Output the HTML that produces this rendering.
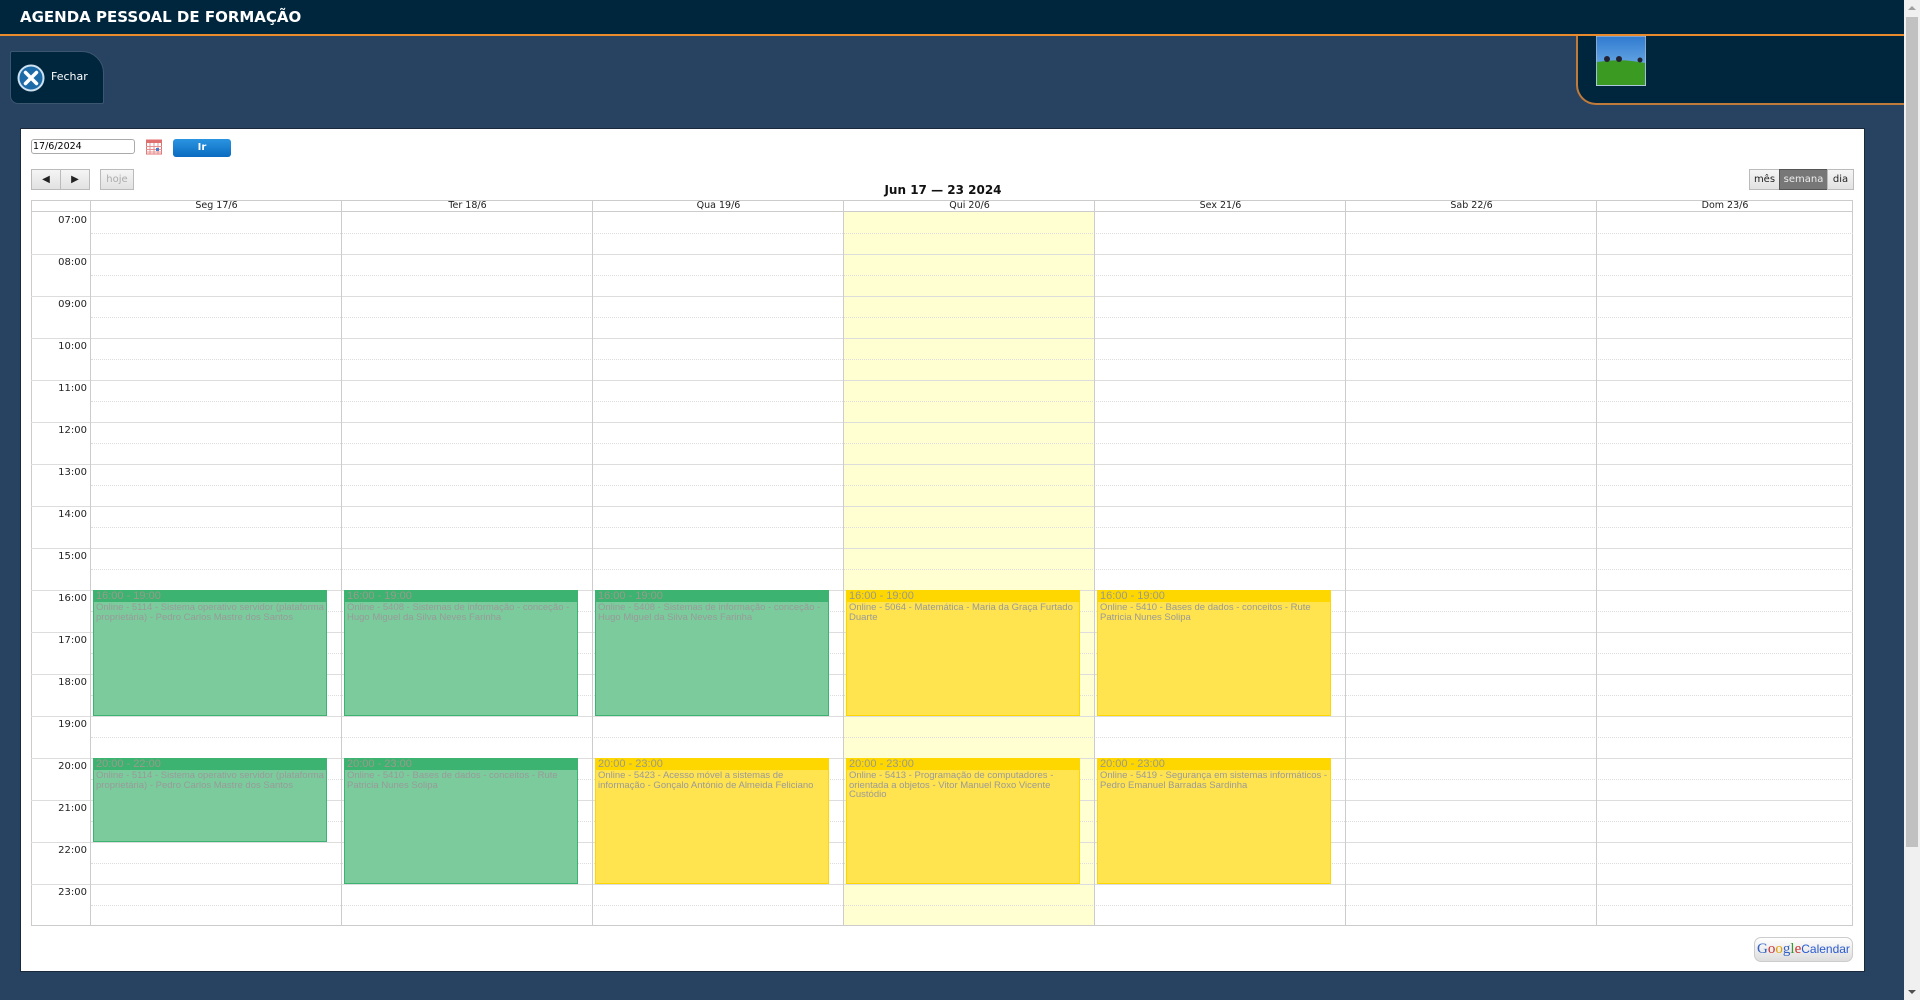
<!DOCTYPE html>
<html><head><meta charset="utf-8"><style>
*{box-sizing:border-box;margin:0;padding:0}
body{width:1920px;height:1000px;background:#284361;font-family:"DejaVu Sans","Liberation Sans",sans-serif;position:relative;overflow:hidden}
.a{position:absolute}
#top{left:0;top:0;width:1904px;height:36px;background:#00263d;border-bottom:2px solid #e98a2c}
#top span{position:absolute;left:20px;top:8px;color:#fff;font-weight:bold;font-size:15px;font-family:"DejaVu Sans",sans-serif}
#fe{left:10px;top:51px;width:94px;height:53px;background:#00263d;border-radius:2px 22px 2px 8px;border:1px solid #3d5670}
#rp{left:1576px;top:36px;width:328px;height:69px;background:#00263d;border-left:2px solid #c07a3a;border-bottom:2px solid #c07a3a;border-bottom-left-radius:20px}
#sb{left:1904px;top:0;width:16px;height:1000px;background:#f0f0f0}
#wp{left:20px;top:128px;width:1845px;height:844px;background:#fff;border:1px solid #1a2a3a}
.btn{position:absolute;border:1px solid #bbb;background:linear-gradient(#f5f5f5,#e2e2e2);font-size:10px;text-align:center;line-height:19px;color:#222}
.hl{position:absolute;left:31px;width:1822px;height:0}
.ev{position:absolute;width:234px;font-family:"Liberation Sans",sans-serif;overflow:hidden}
.ev .h{font-size:11px;line-height:11px;padding-left:2px;color:#9a9a8a}
.ev .b{font-size:9.5px;line-height:9.5px;padding:1px 2px;color:#9a9a9a}
.g{background:#7bcb9d;border:1px solid #3cb371}.g .h{background:#3cb371}
.y{background:#ffe34f;border:1px solid #ffd700}.y .h{background:#ffd700}
.tl{position:absolute;left:31px;width:56px;text-align:right;font-size:10px;color:#222}
.dh{position:absolute;top:200px;height:12px;font-size:9.5px;text-align:center;line-height:12px;color:#222}
</style></head><body>
<div class="a" id="top"><span>AGENDA PESSOAL DE FORMAÇÃO</span></div>
<div class="a" id="fe">
<svg class="a" style="left:6px;top:12px" width="28" height="28" viewBox="0 0 28 28"><circle cx="14" cy="14" r="12.5" fill="#1d6aa8" stroke="#cfe2f2" stroke-width="2"/><path d="M8.5 8.5L19.5 19.5M19.5 8.5L8.5 19.5" stroke="#fff" stroke-width="3.5" stroke-linecap="round"/></svg>
<span class="a" style="left:40px;top:18px;color:#fff;font-size:11px">Fechar</span></div>
<div class="a" id="rp"><svg class="a" style="left:18px;top:0" width="50" height="50" viewBox="0 0 50 50"><defs><linearGradient id="s" x1="0" y1="0" x2="0" y2="1"><stop offset="0" stop-color="#2f7ad0"/><stop offset="1" stop-color="#8cc4f0"/></linearGradient></defs><rect width="50" height="50" fill="url(#s)" stroke="#ccc"/><path d="M1 26Q25 22 49 27V49H1Z" fill="#3a9a22"/><circle cx="11" cy="23" r="3" fill="#223"/><circle cx="23" cy="23" r="3" fill="#223"/><circle cx="44" cy="24" r="2.5" fill="#223"/></svg></div>
<div class="a" id="sb"><div class="a" style="left:2px;top:17px;width:12px;height:830px;background:#c1c1c1"></div>
<div class="a" style="left:4px;top:6px;border:4px solid transparent;border-bottom:4px solid #a0a0a0;border-top:0"></div>
<div class="a" style="left:4px;top:990px;border:4px solid transparent;border-top:4px solid #505050;border-bottom:0"></div></div>
<div class="a" id="wp"></div>
<div class="a" style="left:31px;top:139px;width:104px;height:15px;border:1px solid #aaa;border-radius:3px;font-size:9.5px;line-height:13px;padding-left:1px;background:#fff">17/6/2024</div>
<svg class="a" style="left:146px;top:139px" width="16" height="16" viewBox="0 0 16 16"><rect x="0.5" y="1" width="15" height="14" fill="#fff" stroke="#e07070"/><rect x="0.5" y="1" width="15" height="3" fill="#e07070"/><path d="M0 7.5H16M0 10.5H16M0 13H16M4 4V15M8 4V15M12 4V15" stroke="#e79090" stroke-width="1"/><rect x="10" y="9" width="3" height="3" fill="#4a7ad0"/></svg>
<div class="a" style="left:173px;top:139px;width:58px;height:18px;border-radius:3px;background:linear-gradient(#2b94e0,#0a6bc0);color:#fff;font-size:10px;font-weight:bold;text-align:center;line-height:18px">Ir</div>
<div class="btn" style="left:31px;top:169px;width:30px;height:21px">◀</div>
<div class="btn" style="left:60px;top:169px;width:30px;height:21px">▶</div>
<div class="btn" style="left:100px;top:169px;width:34px;height:21px;color:#aaa">hoje</div>
<div class="a" style="left:0;top:183px;width:1886px;text-align:center;font-size:12px;font-weight:bold;color:#111">Jun 17 — 23 2024</div>
<div class="btn" style="left:1749px;top:169px;width:31px;height:21px">mês</div>
<div class="btn" style="left:1779px;top:169px;width:49px;height:21px;background:#777;color:#eee;border-color:#555">semana</div>
<div class="btn" style="left:1827px;top:169px;width:27px;height:21px">dia</div>
<div class="a" style="left:843px;top:212px;width:252px;height:714px;background:#ffffd2"></div>
<div class="a" style="left:31px;top:200px;width:1822px;height:726px;border:1px solid #ccc"></div>
<div class="hl" style="top:211px;border-top:1px solid #ccc"></div>
<div id="rows"></div>
<div class="dh" style="left:91px;width:251px">Seg 17/6</div>
<div class="dh" style="left:342px;width:251px">Ter 18/6</div>
<div class="dh" style="left:593px;width:251px">Qua 19/6</div>
<div class="dh" style="left:844px;width:251px">Qui 20/6</div>
<div class="dh" style="left:1095px;width:251px">Sex 21/6</div>
<div class="dh" style="left:1346px;width:251px">Sab 22/6</div>
<div class="dh" style="left:1597px;width:256px">Dom 23/6</div>
<div class="ev g" style="left:93px;top:590px;height:126px"><div class="h">16:00 - 19:00</div><div class="b">Online - 5114 - Sistema operativo servidor (plataforma proprietária) - Pedro Carlos Mastre dos Santos</div></div>
<div class="ev g" style="left:344px;top:590px;height:126px"><div class="h">16:00 - 19:00</div><div class="b">Online - 5408 - Sistemas de informação - conceção - Hugo Miguel da Silva Neves Farinha</div></div>
<div class="ev g" style="left:595px;top:590px;height:126px"><div class="h">16:00 - 19:00</div><div class="b">Online - 5408 - Sistemas de informação - conceção - Hugo Miguel da Silva Neves Farinha</div></div>
<div class="ev y" style="left:846px;top:590px;height:126px"><div class="h">16:00 - 19:00</div><div class="b">Online - 5064 - Matemática - Maria da Graça Furtado Duarte</div></div>
<div class="ev y" style="left:1097px;top:590px;height:126px"><div class="h">16:00 - 19:00</div><div class="b">Online - 5410 - Bases de dados - conceitos - Rute Patricia Nunes Solipa</div></div>
<div class="ev g" style="left:93px;top:758px;height:84px"><div class="h">20:00 - 22:00</div><div class="b">Online - 5114 - Sistema operativo servidor (plataforma proprietária) - Pedro Carlos Mastre dos Santos</div></div>
<div class="ev g" style="left:344px;top:758px;height:126px"><div class="h">20:00 - 23:00</div><div class="b">Online - 5410 - Bases de dados - conceitos - Rute Patricia Nunes Solipa</div></div>
<div class="ev y" style="left:595px;top:758px;height:126px"><div class="h">20:00 - 23:00</div><div class="b">Online - 5423 - Acesso móvel a sistemas de informação - Gonçalo António de Almeida Feliciano</div></div>
<div class="ev y" style="left:846px;top:758px;height:126px"><div class="h">20:00 - 23:00</div><div class="b">Online - 5413 - Programação de computadores - orientada a objetos - Vitor Manuel Roxo Vicente Custódio</div></div>
<div class="ev y" style="left:1097px;top:758px;height:126px"><div class="h">20:00 - 23:00</div><div class="b">Online - 5419 - Segurança em sistemas informáticos - Pedro Emanuel Barradas Sardinha</div></div>
<div class="a" style="left:1754px;top:937px;width:99px;height:25px;border:1px solid #ccc;border-radius:7px;background:linear-gradient(#fff,#ddd);font-size:12px;line-height:23px;text-align:center;white-space:nowrap"><span style="font-family:'Liberation Serif',serif;font-size:15px"><span style="color:#3561c4">G</span><span style="color:#c33">o</span><span style="color:#e0a000">o</span><span style="color:#3561c4">g</span><span style="color:#393">l</span><span style="color:#c33">e</span></span><span style="color:#2a5bd0;font-size:12px;font-family:'Liberation Sans',sans-serif">Calendar</span></div>
<script>
var r=document.getElementById('rows'),h='';
var cols=[91,342,593,844,1095,1346,1597];
for(var i=0;i<17;i++){var y=212+i*42;
if(i>0)h+='<div class="hl" style="top:'+y+'px;border-top:1px solid #ddd"></div>';
h+='<div class="hl" style="left:91px;width:1762px;top:'+(y+21)+'px;border-top:1px dotted #ddd"></div>';
h+='<div class="tl" style="top:'+(y+3)+'px">'+(i+7<10?'0':'')+(i+7)+':00</div>';}
for(var c=0;c<cols.length;c++)h+='<div class="a" style="left:'+(cols[c]-1)+'px;top:200px;width:1px;height:726px;background:#ccc"></div>';
r.innerHTML=h;
</script>
</body></html>
